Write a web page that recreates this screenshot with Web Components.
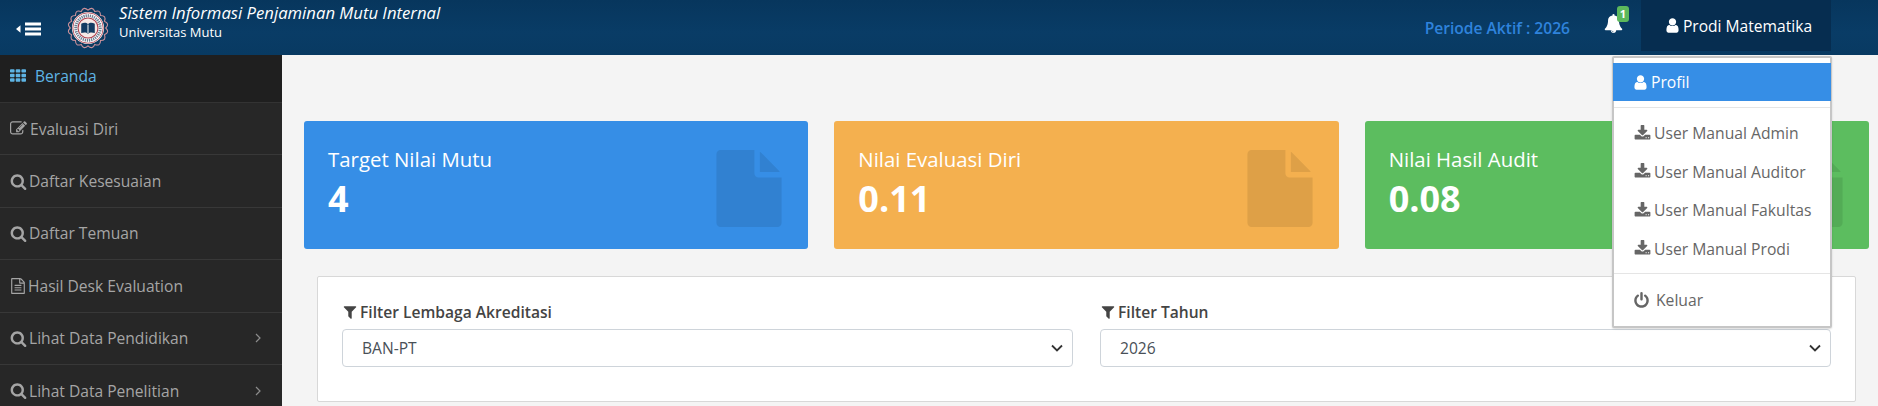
<!DOCTYPE html>
<html><head><meta charset="utf-8">
<style>
html,body{margin:0;padding:0;height:406px;overflow:hidden;background:#f4f4f4;font-family:"Open Sans",sans-serif;}
</style></head>
<body>
<app-shell>
  <top-bar slot="top"></top-bar>
  <side-nav slot="side">
    <nav-item icon="th" active>Beranda</nav-item>
    <nav-item icon="edit">Evaluasi Diri</nav-item>
    <nav-item icon="search">Daftar Kesesuaian</nav-item>
    <nav-item icon="search">Daftar Temuan</nav-item>
    <nav-item icon="file">Hasil Desk Evaluation</nav-item>
    <nav-item icon="search" more>Lihat Data Pendidikan</nav-item>
    <nav-item icon="search" more>Lihat Data Penelitian</nav-item>
  </side-nav>
  <div slot="main">
    <stat-row>
      <stat-card label="Target Nilai Mutu" value="4" color="#368ee6" ></stat-card>
      <stat-card label="Nilai Evaluasi Diri" value="0.11" color="#f4b04f"></stat-card>
      <stat-card label="Nilai Hasil Audit" value="0.08" color="#5cbd5f"></stat-card>
    </stat-row>
    <filter-panel>
      <filter-field label="Filter Lembaga Akreditasi" value="BAN-PT"></filter-field>
      <filter-field label="Filter Tahun" value="2026"></filter-field>
    </filter-panel>
  </div>
  <user-menu slot="over"></user-menu>
</app-shell>
<script>
const P={
user:'M1536 1399q0 109-62.500 187t-150.500 78h-854q-88 0-150.500-78t-62.500-187q0-85 8.500-160.500t31.500-152 58.500-131 94-89 134.500-34.500q131 128 313 128t313-128q76 0 134.500 34.500t94 89 58.500 131 31.500 152 8.500 160.500zm-256-887q0 159-112.500 271.500t-271.500 112.500-271.500-112.500-112.500-271.500 112.500-271.500 271.500-112.500 271.500 112.500 112.500 271.500z',
search:'M1216 832q0-185-131.500-316.500t-316.500-131.500-316.500 131.500-131.500 316.500 131.500 316.500 316.500 131.500 316.500-131.500 131.500-316.500zm512 832q0 52-38 90t-90 38q-54 0-90-38l-343-342q-179 124-399 124-143 0-273.500-55.500t-225-150-150-225-55.500-273.500 55.500-273.500 150-225 225-150 273.500-55.500 273.500 55.500 225 150 150 225 55.500 273.500q0 220-124 399l343 343q37 37 37 90z',
filter:'M1595 295q17 41-14 70l-493 493v742q0 42-39 59-13 5-25 5-27 0-45-19l-256-256q-19-19-19-45v-486l-493-493q-31-29-14-70 17-39 59-39h1280q42 0 59 39z',
download:'M1344 1344q0-26-19-45t-45-19-45 19-19 45 19 45 45 19 45-19 19-45zm256 0q0-26-19-45t-45-19-45 19-19 45 19 45 45 19 45-19 19-45zm128-224v320q0 40-28 68t-68 28h-1472q-40 0-68-28t-28-68v-320q0-40 28-68t68-28h465l135 136q58 56 136 56t136-56l136-136h464q40 0 68 28t28 68zm-325-569q17 41-14 70l-448 448q-18 19-45 19t-45-19l-448-448q-31-29-14-70 17-39 59-39h256v-448q0-26 19-45t45-19h256q26 0 45 19t19 45v448h256q42 0 59 39z',
power:'M1664 896q0 156-61 298t-164 245-245 164-298 61-298-61-245-164-164-245-61-298q0-182 80.500-343t226.500-270q43-32 95.500-25t83.500 50q32 42 24.500 94.500t-49.500 84.500q-98 74-151.500 181t-53.500 228q0 104 40.500 198.500t109.500 163.500 163.500 109.500 198.500 40.500 198.500-40.500 163.500-109.500 109.500-163.500 40.500-198.500q0-121-53.500-228t-151.500-181q-42-32-49.500-84.500t24.500-94.500q31-43 84-50t95 25q146 109 226.500 270t80.500 343zm-640-768v640q0 52-38 90t-90 38-90-38-38-90v-640q0-52 38-90t90-38 90 38 38 90z',
bell:'M912 1696q0-16-16-16-59 0-101.500-42.500t-42.500-101.500q0-16-16-16t-16 16q0 73 51.500 124.500t124.500 51.500q16 0 16-16zm816-288q0 52-38 90t-90 38h-448q0 106-75 181t-181 75-181-75-75-181h-448q-52 0-90-38t-38-90q50-42 91-88t85-119.500 74.500-158.500 50-206 19.500-260q0-152 117-282.500t307-158.500q-8-19-8-39 0-40 28-68t68-28 68 28 28 68q0 20-8 39 190 28 307 158.500t117 282.500q0 139 19.500 260t50 206 74.500 158.500 85 119.500 91 88z',
edit:'M888 1184l116-116-152-152-116 116v56h96v96h56zm440-720q-16-16-33 1l-350 350q-17 17-1 33t33-1l350-350q17-17 1-33zm80 594v190q0 119-84.500 203.500t-203.500 84.500h-832q-119 0-203.500-84.500t-84.500-203.500v-832q0-119 84.500-203.500t203.500-84.500h832q63 0 117 25 15 7 18 23 3 17-9 29l-49 49q-14 14-32 8-23-6-45-6h-832q-66 0-113 47t-47 113v832q0 66 47 113t113 47h832q66 0 113-47t47-113v-126q0-13 9-22l64-64q15-15 35-7t20 29zm-96-738l288 288-672 672h-288v-288zm444 132l-92 92-288-288 92-92q28-28 68-28t68 28l152 152q28 28 28 68t-28 68z',
file:'M1596 380q28 28 48 76t20 88v1152q0 40-28 68t-68 28h-1344q-40 0-68-28t-28-68v-1600q0-40 28-68t68-28h896q40 0 88 20t76 48zm-444-244v376h376q-10-29-22-41l-313-313q-12-12-41-22zm384 1528v-1024h-416q-40 0-68-28t-28-68v-416h-768v1536h1280zm-1024-864q0-14 9-23t23-9h704q14 0 23 9t9 23v64q0 14-9 23t-23 9h-704q-14 0-23-9t-9-23v-64zm736 224q14 0 23 9t9 23v64q0 14-9 23t-23 9h-704q-14 0-23-9t-9-23v-64q0-14 9-23t23-9h704zm0 256q14 0 23 9t9 23v64q0 14-9 23t-23 9h-704q-14 0-23-9t-9-23v-64q0-14 9-23t23-9h704z',
solid:'M1152 512v-472q22 14 36 28l408 408q14 14 28 36h-472zm-128 32q0 40 28 68t68 28h544v1056q0 40-28 68t-68 28h-1344q-40 0-68-28t-28-68v-1600q0-40 28-68t68-28h800v544z',
th:'M512 1248v192q0 40-28 68t-68 28h-320q-40 0-68-28t-28-68v-192q0-40 28-68t68-28h320q40 0 68 28t28 68zm0-512v192q0 40-28 68t-68 28h-320q-40 0-68-28t-28-68v-192q0-40 28-68t68-28h320q40 0 68 28t28 68zm640 512v192q0 40-28 68t-68 28h-320q-40 0-68-28t-28-68v-192q0-40 28-68t68-28h320q40 0 68 28t28 68zm-640-1024v192q0 40-28 68t-68 28h-320q-40 0-68-28t-28-68v-192q0-40 28-68t68-28h320q40 0 68 28t28 68zm640 512v192q0 40-28 68t-68 28h-320q-40 0-68-28t-28-68v-192q0-40 28-68t68-28h320q40 0 68 28t28 68zm640 512v192q0 40-28 68t-68 28h-320q-40 0-68-28t-28-68v-192q0-40 28-68t68-28h320q40 0 68 28t28 68zm-640-1024v192q0 40-28 68t-68 28h-320q-40 0-68-28t-28-68v-192q0-40 28-68t68-28h320q40 0 68 28t28 68zm640 512v192q0 40-28 68t-68 28h-320q-40 0-68-28t-28-68v-192q0-40 28-68t68-28h320q40 0 68 28t28 68zm0-512v192q0 40-28 68t-68 28h-320q-40 0-68-28t-28-68v-192q0-40 28-68t68-28h320q40 0 68 28t28 68z'
};
const svg=(n,w,h,extra='')=>`<svg xmlns="http://www.w3.org/2000/svg" width="${w}" height="${h||w}" viewBox="0 0 1792 1792" preserveAspectRatio="none" fill="currentColor" style="flex:none;${extra}"><path d="${P[n]}"/></svg>`;
function def(name,fn){customElements.define(name,class extends HTMLElement{connectedCallback(){if(!this.shadowRoot){this.attachShadow({mode:'open'}).innerHTML=fn(this);}}});}

def('app-shell',()=>`<style>
:host{display:grid;grid-template-columns:282px 1fr;grid-template-rows:55px 351px;width:1878px;height:406px;overflow:hidden;position:relative}
.top{grid-column:1/3}.main{background:#f4f4f4;min-width:0}
.side{min-width:0;overflow:hidden}
</style>
<div class="top"><slot name="top"></slot></div>
<div class="side"><slot name="side"></slot></div>
<div class="main"><slot name="main"></slot></div>
<slot name="over"></slot>`);

def('top-bar',()=>{
 const n=16,R=23.6,r=21;let d='';
 for(let i=0;i<n;i++){const a=i/n*2*Math.PI,b=(i+1)/n*2*Math.PI,m=(a+b)/2;
  const p=(t,q)=>`${(26+q*Math.cos(t)).toFixed(1)} ${(26+q*Math.sin(t)).toFixed(1)}`;
  d+=(i?'':'M'+p(a,r))+` Q${p(m,R+3)} ${p(b,r)}`;}
 return `<style>
:host{display:flex;align-items:stretch;height:55px;background:linear-gradient(#07365d,#093c66 60%,#083a62);color:#fff;font-family:"Open Sans",sans-serif}
.burger{width:66px;display:flex;align-items:center;flex:none;padding:2px 0 0 16px;box-sizing:border-box}
.logo{flex:none;display:flex;align-items:center}
.brand{margin-left:9px;display:flex;flex-direction:column;justify-content:center;padding-bottom:13px}
.t{font-size:16.7px;font-style:italic;line-height:21px;white-space:nowrap}
.u{font-size:13px;line-height:15px;white-space:nowrap;margin-top:2px}
.sp{flex:1}
.per{color:#2f83dc;font-weight:600;font-size:15.6px;align-self:center;margin-right:34px;white-space:nowrap}
.bell{position:relative;width:19px;margin-right:18px;align-self:center;display:flex;margin-bottom:9px}
.badge{position:absolute;left:13px;top:-8px;width:12px;height:16px;background:#5cb85c;border-radius:3px;font-size:11px;font-weight:700;line-height:15px;text-align:center}
.who{width:190px;height:51px;background:#062d50;margin-right:47px;display:flex;align-items:center;justify-content:center;font-size:15.6px;gap:2px;white-space:nowrap;box-sizing:border-box;padding-left:4px}
</style>
<div class="burger"><svg width="26" height="14" viewBox="0 0 26 14"><path d="M0 7 4.500 3.200V10.800Z" fill="#fff"/><rect x="9" y="0.500" width="16" height="3" fill="#fff"/><rect x="9" y="5.500" width="16" height="3" fill="#fff"/><rect x="9" y="10.500" width="16" height="3" fill="#fff"/></svg></div>
<div class="logo"><svg width="44" height="44" viewBox="0 0 52 52"><path d="${d}Z" fill="#0d3b60" stroke="#c9909a" stroke-width="1.300"/><circle cx="26" cy="26" r="19" fill="#fff"/><circle cx="26" cy="26" r="18" fill="none" stroke="#b0404d" stroke-width="1"/><circle cx="26" cy="26" r="14.500" fill="none" stroke="#6d7f92" stroke-width="3.500" stroke-dasharray="1.500 1"/><circle cx="26" cy="26" r="11.800" fill="#f6e9e6" stroke="#b0404d" stroke-width="1.300"/><path d="M18 21c3-1.500 6-1.500 8 .5 2-2 5-2 8-.5v11c-3-1-6-1-8 .7-2-1.700-5-1.700-8-.7Z" fill="#123b62"/><path d="M25.500 22v10M26.500 22v10" stroke="#fff" stroke-width=".6"/></svg></div>
<div class="brand"><div class="t">Sistem Informasi Penjaminan Mutu Internal</div><div class="u">Universitas Mutu</div></div>
<div class="sp"></div>
<div class="per">Periode Aktif : 2026</div>
<div class="bell">${svg('bell',19)}<span class="badge">1</span></div>
<div class="who">${svg('user',17)}<span>Prodi Matematika</span></div>`});

def('side-nav',()=>`<style>:host{display:block;background:#272727;height:351px;overflow:hidden}</style><slot></slot>`);

def('nav-item',h=>{const on=h.hasAttribute('active'),ic=h.getAttribute('icon');
 const sz={th:16,edit:17,search:17,file:16}[ic];
 const gp={th:9,edit:3,search:2,file:2}[ic];
 return `<style>
:host{display:flex;align-items:center;box-sizing:border-box;height:${on?48:52.4}px;padding:${on?'0 0 5px 10px':'0 0 0 10px'};background:${on?'#1f1f1f':'#272727'};border-bottom:1px solid ${on?'#333':'#383838'};color:${on?'#5eb4e4':'#a5a5a5'};font-size:15.6px;white-space:nowrap}
.g{display:flex;align-items:center;gap:${gp}px;flex:1}
.a{margin-right:21px;display:flex}
</style><div class="g">${svg(ic,sz)}<span><slot></slot></span></div>${h.hasAttribute('more')?`<span class="a"><svg width="6" height="10" viewBox="0 0 6 10" fill="none" stroke="#8c8c8c" stroke-width="1.200"><path d="M1 1l4 4-4 4"/></svg></span>`:''}`});

def('stat-row',()=>`<style>:host{display:flex;gap:26px;padding:66px 9px 0 22px;box-sizing:border-box;width:1596px}</style><slot></slot>`);

def('stat-card',h=>`<style>
:host{flex:1;display:flex;height:128px;border-radius:3px;background:${h.getAttribute('color')};color:#fff;position:relative;box-sizing:border-box;padding:25px 24px 0;flex-direction:column}
.l{font-size:20.4px;line-height:27px;white-space:nowrap}
.v{font-size:36px;font-weight:700;line-height:44px;margin-top:4px}
.i{position:absolute;right:21px;top:29px;color:rgba(0,0,0,.09);display:flex}
</style><div class="l">${h.getAttribute('label')}</div><div class="v">${h.getAttribute('value')}</div><div class="i">${svg('solid',76,77)}</div>`);

def('filter-panel',()=>`<style>:host{display:flex;gap:27px;margin:27px 0 0 35px;width:1539px;height:126px;box-sizing:border-box;padding:22px 24px 0;background:#fff;border:1px solid #d8d8d8;border-radius:2px}</style><slot></slot>`);

def('filter-field',h=>`<style>
:host{flex:1;display:block;min-width:0;color:#333}
.lab{font-size:15.6px;font-weight:600;line-height:20px;height:30px;padding-bottom:5px;box-sizing:border-box;display:flex;align-items:center;gap:2px;color:#444}
.sel{height:38px;box-sizing:border-box;border:1px solid #ced4da;border-radius:4px;background:#fff;display:flex;align-items:center;justify-content:space-between;padding:0 9px 0 19px;font-size:15.6px;color:#495057}
</style><div class="lab">${svg('filter',16)}<span>${h.getAttribute('label')}</span></div><div class="sel"><span>${h.getAttribute('value')}</span><svg width="12" height="8" viewBox="0 0 12 8" fill="none" stroke="#333" stroke-width="1.800"><path d="M1 1.500l5 5 5-5"/></svg></div>`);

def('user-menu',()=>`<style>
:host{position:absolute;left:1612px;top:56px;width:220px;height:272px;box-sizing:border-box;background:#fff;border:2px solid #c6c6c6;border-radius:2px;color:#666;font-size:15.7px;padding:5px 0 0 0;box-shadow:0 1px 2px rgba(0,0,0,.15)}
.a{height:38px;background:#368ee6;color:#fff;display:flex;align-items:center;padding-left:19px;gap:2px;margin:0 -1px}
.d{height:1px;background:#e5e5e5}
.d1{margin-top:6px;margin-bottom:6px}
.i{height:38.500px;display:flex;align-items:center;padding-left:20px;gap:3px;white-space:nowrap}
.d2{margin-top:5px;margin-bottom:6px}
.o{height:40px;display:flex;align-items:center;padding-left:19px;gap:6px}
</style>
<div class="a">${svg('user',17)}<span>Profil</span></div>
<div class="d d1"></div>
<div class="i">${svg('download',17)}<span>User Manual Admin</span></div>
<div class="i">${svg('download',17)}<span>User Manual Auditor</span></div>
<div class="i">${svg('download',17)}<span>User Manual Fakultas</span></div>
<div class="i">${svg('download',17)}<span>User Manual Prodi</span></div>
<div class="d d2"></div>
<div class="o">${svg('power',17)}<span>Keluar</span></div>`);
</script>
</body></html>
